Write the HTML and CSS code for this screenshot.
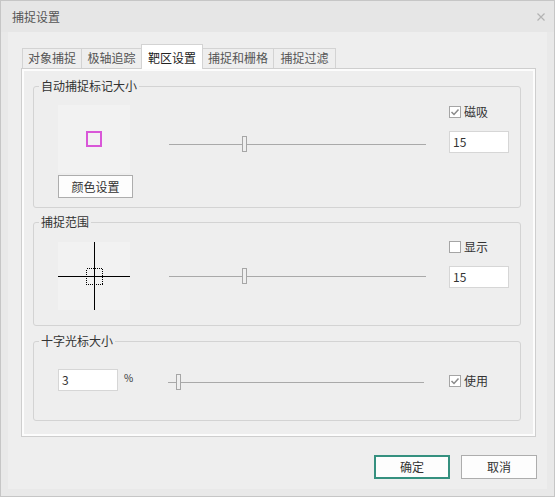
FILE: index.html
```html
<!DOCTYPE html>
<html>
<head>
<meta charset="utf-8">
<link rel="stylesheet" href="styles.css">
</head>
<body>
<div class="window">
  <div class="titlebar">
    <span class="title">捕捉设置</span>
    <svg class="close" width="8" height="8" viewBox="0 0 8 8"><path d="M0.5 0.5 L7.5 7.5 M7.5 0.5 L0.5 7.5" stroke="#b3b3b3" stroke-width="1.2" fill="none"/></svg>
  </div>
  <div class="content">
    <div class="tabs">
      <div class="tab t1">对象捕捉</div>
      <div class="tab t2">极轴追踪</div>
      <div class="tab t3 active">靶区设置</div>
      <div class="tab t4">捕捉和栅格</div>
      <div class="tab t5">捕捉过滤</div>
    </div>
    <div class="panel">
      <div class="panel-inner">
        <fieldset class="group">
          <legend>自动捕捉标记大小</legend>
          <div class="group-body g1">
            <div class="col-left">
              <div class="preview"><span class="marker"></span></div>
              <div class="btn color-btn">颜色设置</div>
            </div>
            <div class="slider s1"><span class="thumb" style="left:73px"></span></div>
            <div class="col-right">
              <div class="check"><span class="box"><svg width="10" height="10" viewBox="0 0 10 10"><path d="M1.5 5 L4 7.5 L8.5 2.5" stroke="#8a8a8a" stroke-width="1.5" fill="none"/></svg></span>磁吸</div>
              <div class="input">15</div>
            </div>
          </div>
        </fieldset>
        <fieldset class="group gap6">
          <legend>捕捉范围</legend>
          <div class="group-body g2">
            <div class="col-left">
              <div class="preview">
                <svg width="72" height="68" viewBox="0 0 72 68" shape-rendering="crispEdges">
                  <path d="M36.5 0 V68 M0 34.5 H72" stroke="#000" stroke-width="1"/>
                  <rect x="28.5" y="26.5" width="16" height="16" fill="none" stroke="#000" stroke-width="1" stroke-dasharray="1 1"/>
                </svg>
              </div>
            </div>
            <div class="slider s2"><span class="thumb" style="left:73px"></span></div>
            <div class="col-right r2">
              <div class="check"><span class="box"></span>显示</div>
              <div class="input">15</div>
            </div>
          </div>
        </fieldset>
        <fieldset class="group gap7">
          <legend>十字光标大小</legend>
          <div class="group-body g3">
            <div class="col-left row3">
              <div class="input">3</div>
              <span class="pct">%</span>
            </div>
            <div class="slider s3"><span class="thumb" style="left:8px"></span></div>
            <div class="col-right r3">
              <div class="check"><span class="box"><svg width="10" height="10" viewBox="0 0 10 10"><path d="M1.5 5 L4 7.5 L8.5 2.5" stroke="#8a8a8a" stroke-width="1.5" fill="none"/></svg></span>使用</div>
            </div>
          </div>
        </fieldset>
      </div>
    </div>
    <div class="buttons">
      <div class="btn primary">确定</div>
      <div class="btn">取消</div>
    </div>
  </div>
</div>
</body>
</html>
```
FILE: styles.css
```css
* { box-sizing: border-box; }
html, body { margin: 0; padding: 0; }
body {
  font-family: "Noto Sans CJK SC", "Noto Sans", sans-serif;
  font-size: 12px;
  color: #333;
  background: #e9e9e9;
}
.window {
  width: 555px;
  height: 497px;
  border: 1px solid #c6c6c6;
  background: #e9e9e9;
  display: flex;
  flex-direction: column;
}
.titlebar {
  height: 31px;
  flex: none;
  background: #e6e6e6;
  display: flex;
  align-items: center;
  justify-content: space-between;
  padding: 0 9px 0 11px;
}
.title { color: #555; font-size: 12px; line-height: 16px; }
.close { display: block; margin-top: 0; }
.content {
  flex: 1;
  margin: 0 7px 7px 7px;
  background: #eeeeee;
  padding: 12px 11px 0 13px;
}
.tabs {
  display: flex;
  align-items: flex-end;
  height: 24px;
  margin-left: 1px;
}
.tab {
  height: 20px;
  border: 1px solid #d3d3d3;
  border-bottom: none;
  margin-right: -1px;
  padding: 0;
  text-align: center;
  line-height: 18px;
  color: #555;
  background: #eeeeee;
  white-space: nowrap;
}
.t1 { width: 60px; }
.t2 { width: 61px; }
.t3 { width: 62px; }
.t4 { width: 72px; }
.t5 { width: 63px; }
.tab.active {
  height: 25px;
  margin-bottom: -1px;
  padding-top: 4px;
  background: #fff;
  color: #222;
  position: relative;
  z-index: 1;
}
.panel {
  height: 369px;
  width: 515px;
  border: 1px solid #cecece;
}
.panel-inner {
  height: 100%;
  border: 2px solid #fcfcfc;
  padding: 7px 12px 0 9px;
}
.group {
  margin: 0;
  padding: 0;
  min-width: 0;
  width: 488px;
  border: 1px solid #d3d3d3;
  border-radius: 3px;
}
.group legend {
  margin-left: 5px;
  padding: 0 2px;
  font-size: 12px;
  line-height: 16px;
  color: #333;
}
.gap6 { margin-top: 6px; }
.gap7 { margin-top: 7px; }
.group-body {
  display: flex;
  align-items: flex-start;
  padding-left: 24px;
}
.g1 { padding-top: 11px; padding-bottom: 9px; }
.g2 { padding-top: 12px; padding-bottom: 15px; }
.g3 { padding-top: 20px; padding-bottom: 29px; }
.col-left { width: 75px; flex: none; }
.preview {
  width: 72px;
  height: 68px;
  background: #f2f2f2;
  display: flex;
  align-items: center;
  justify-content: center;
}
.preview svg { display: block; }
.marker {
  width: 16px;
  height: 16px;
  border: 2px solid #d957d8;
}
.btn {
  width: 76px;
  height: 24px;
  border: 1px solid #adadad;
  background: #fdfdfd;
  text-align: center;
  line-height: 22px;
  color: #333;
}
.color-btn {
  width: 75px;
  height: 23px;
  line-height: 21px;
  margin-top: 2px;
}
.slider {
  position: relative;
  flex: none;
  width: 257px;
  height: 16px;
  margin-left: 36px;
}
.slider::before {
  content: "";
  position: absolute;
  left: 0;
  right: 0;
  top: 8px;
  height: 1px;
  background: #a9a9a9;
}
.thumb {
  position: absolute;
  top: 0;
  width: 5px;
  height: 16px;
  border: 1px solid #a6a6a6;
  background: #efefef;
}
.s1 { margin-top: 31px; }
.s2 { margin-top: 26px; }
.s3 { margin-top: 5px; margin-left: 35px; width: 256px; }
.col-right {
  flex: none;
  width: 60px;
  margin-left: 23px;
  padding-top: 1px;
}
.r2 { padding-top: 0; margin-top: -1px; }
.r3 { margin-left: 25px; padding-top: 6px; }
.check {
  display: flex;
  align-items: center;
  height: 12px;
  line-height: 12px;
  white-space: nowrap;
  color: #333;
}
.box {
  width: 12px;
  height: 12px;
  border: 1px solid #a5a5a5;
  background: #fff;
  margin-right: 3px;
  display: flex;
  align-items: center;
  justify-content: center;
  flex: none;
}
.box svg { display: block; }
.input {
  width: 60px;
  height: 22px;
  border: 1px solid #d6d6d6;
  background: #fff;
  padding-left: 3px;
  line-height: 20px;
  color: #333;
  margin-top: 13px;
}
.row3 { display: flex; align-items: flex-start; }
.row3 .input { margin-top: 0; flex: none; }
.pct {
  font-size: 10px;
  line-height: 10px;
  margin-left: 6px;
  margin-top: 4px;
  color: #333;
}
.buttons {
  display: flex;
  justify-content: flex-end;
  gap: 11px;
  margin-top: 18px;
  margin-right: -1px;
}
.primary {
  border: 2px solid #35907f;
  line-height: 20px;
}
```
